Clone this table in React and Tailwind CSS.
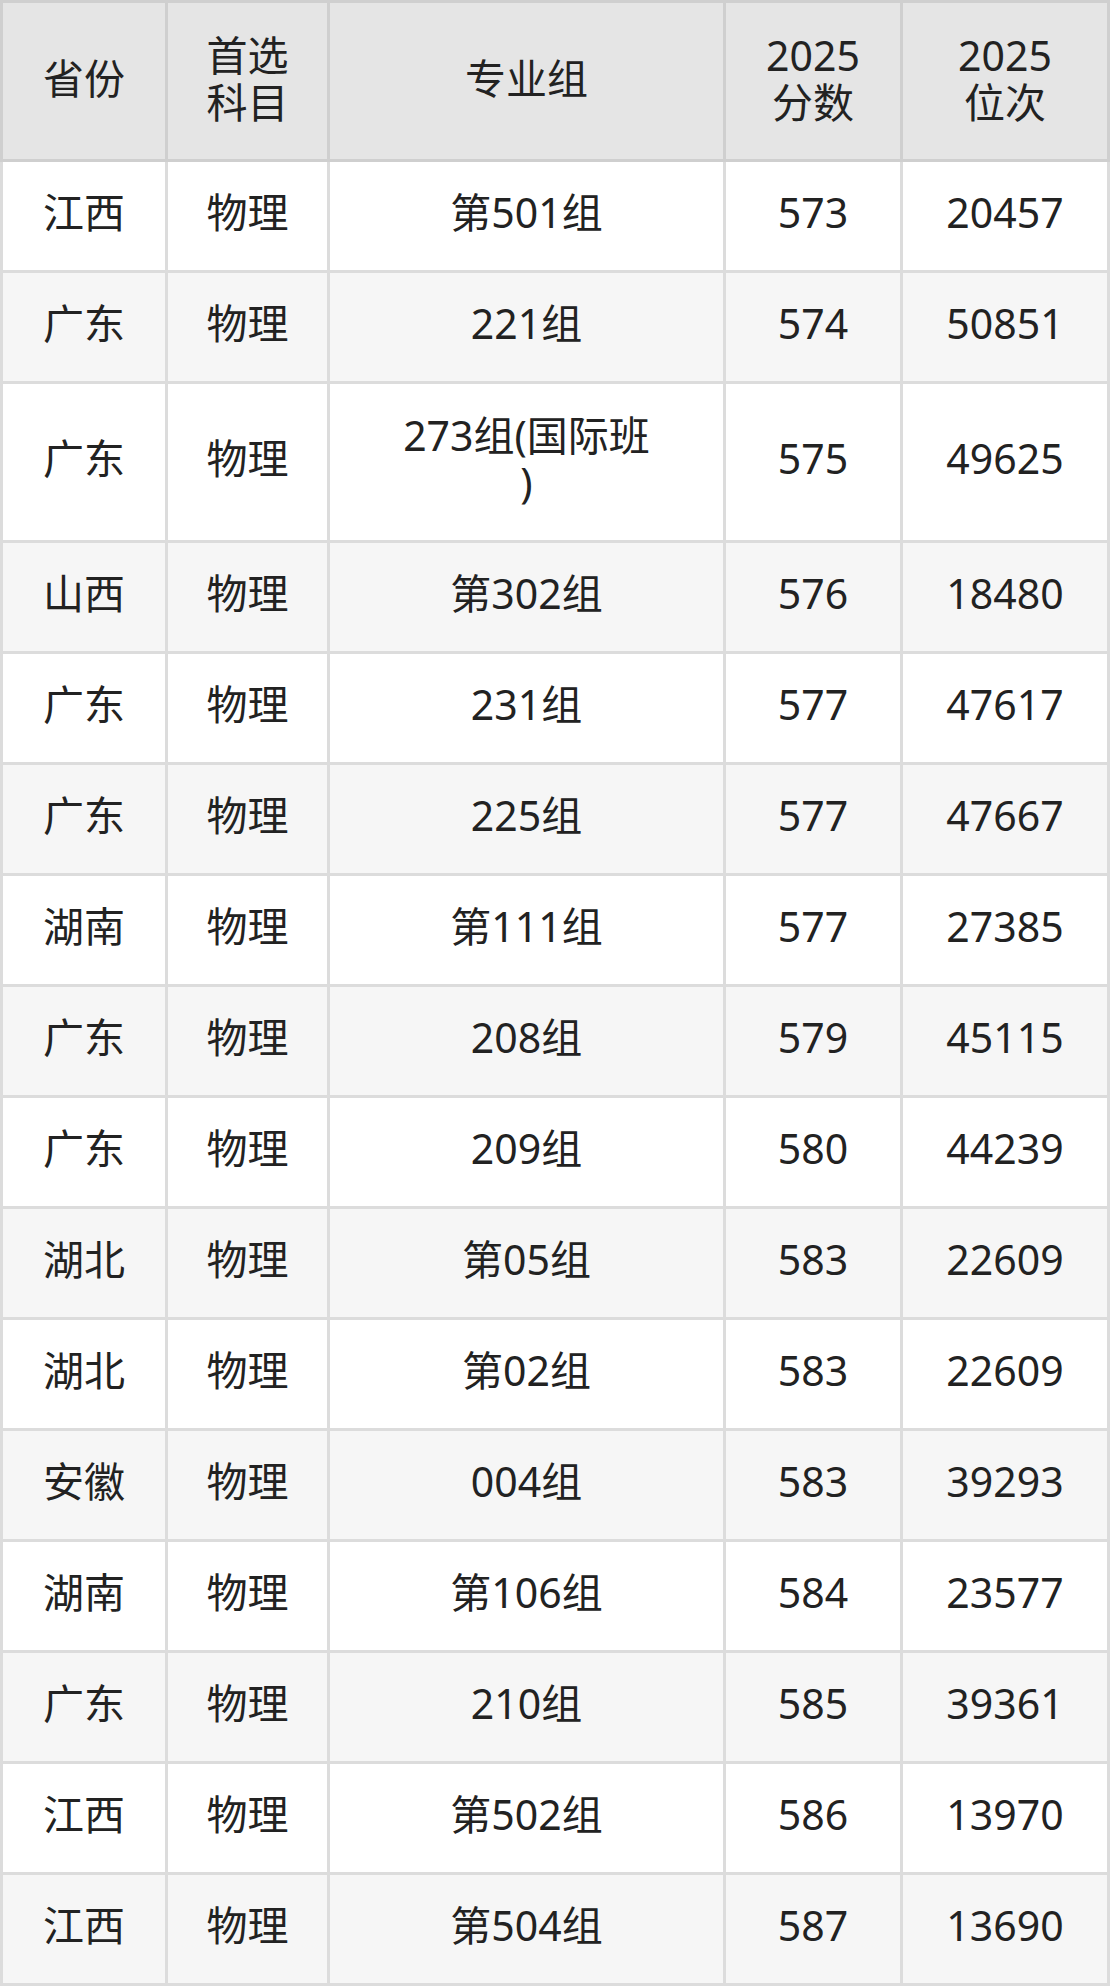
import React from 'react';

const rows = [
  ['江西', '物理', '第501组', '573', '20457'],
  ['广东', '物理', '221组', '574', '50851'],
  ['广东', '物理', ['273组(国际班', ')'], '575', '49625', true],
  ['山西', '物理', '第302组', '576', '18480'],
  ['广东', '物理', '231组', '577', '47617'],
  ['广东', '物理', '225组', '577', '47667'],
  ['湖南', '物理', '第111组', '577', '27385'],
  ['广东', '物理', '208组', '579', '45115'],
  ['广东', '物理', '209组', '580', '44239'],
  ['湖北', '物理', '第05组', '583', '22609'],
  ['湖北', '物理', '第02组', '583', '22609'],
  ['安徽', '物理', '004组', '583', '39293'],
  ['湖南', '物理', '第106组', '584', '23577'],
  ['广东', '物理', '210组', '585', '39361'],
  ['江西', '物理', '第502组', '586', '13970'],
  ['江西', '物理', '第504组', '587', '13690'],
];

const cols = 'grid grid-cols-[162px_159px_393px_174px_204px]';
const th = 'h-[156px] pb-[5px] bg-[#e5e5e5] flex items-center justify-center text-center';

export default function App() {
  return (
    <div
      className="w-[1110px] bg-white text-[#222] text-[41px] leading-[47px]"
      style={{ fontFamily: '"Noto Sans", "Noto Sans CJK SC", sans-serif' }}
    >
      {/* header */}
      <div className={`${cols} gap-[3px] bg-[#cfcfcf] border-[3px] border-[#cfcfcf]`}>
        <div className={th}>省份</div>
        <div className={th}>
          首选<br />科目
        </div>
        <div className={th}>专业组</div>
        <div className={th}>
          2025<br />分数
        </div>
        <div className={th}>
          2025<br />位次
        </div>
      </div>

      {/* body */}
      <div className={`${cols} gap-[3px] bg-[#dcdcdc] border-x-[3px] border-b-[3px] border-[#dcdcdc]`}>
        {rows.map((r, i) => {
          const bg = i % 2 === 1 ? 'bg-[#f6f6f6]' : 'bg-white';
          const h = r[5] ? 'h-[156px]' : 'h-[108px]';
          const td = `${h} ${bg} pb-[7px] flex items-center justify-center text-center`;
          return (
            <React.Fragment key={i}>
              <div className={td}>{r[0]}</div>
              <div className={td}>{r[1]}</div>
              <div className={td}>
                {Array.isArray(r[2]) ? (
                  <div>
                    {r[2][0]}
                    <br />
                    {r[2][1]}
                  </div>
                ) : (
                  r[2]
                )}
              </div>
              <div className={td}>{r[3]}</div>
              <div className={td}>{r[4]}</div>
            </React.Fragment>
          );
        })}
      </div>
    </div>
  );
}
